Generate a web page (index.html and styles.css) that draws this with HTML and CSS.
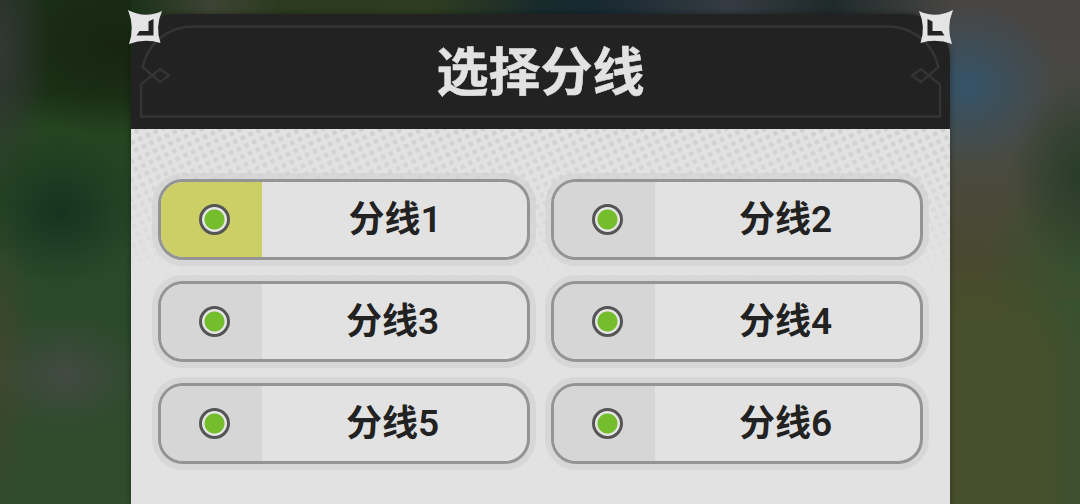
FILE: index.html
```html
<!DOCTYPE html>
<html lang="zh-CN">
<head>
  <meta charset="UTF-8" />
  <meta name="viewport" content="width=device-width, initial-scale=1.0"/>
  <title>选择分线</title>
  <link rel="stylesheet" href="styles.css">
</head>
<body>
  <div class="panel">
    <div class="header">
      <svg class="frame" width="819" height="115" viewBox="0 0 819 115">
        <g fill="none" stroke="#343434" stroke-width="2.5">
          <path d="M409 12.500H62C40 12.500 18 26 11.500 53L29 68L38 61.500L29 55L10 70.500V102.500H409"/>
          <path d="M409 12.500H757C779 12.500 801 26 807.500 53L790 68L781 61.500L790 55L809 70.500V102.500H409"/>
        </g>
      </svg>
      <svg class="star left" width="34" height="34" viewBox="0 0 34 34">
        <path fill="#e4e4e4" d="M0 0Q17 9 34 1Q27 17 32.500 33Q17 28 1 34Q7 17 0 0Z"/>
        <path fill="#222" d="M20.500 11.500L25.500 9V25.500H8.500L11.500 21H20.500Z"/>
      </svg>
      <svg class="star right" width="34" height="34" viewBox="0 0 34 34">
        <path fill="#e4e4e4" d="M0 0Q17 9 34 1Q27 17 32.500 33Q17 28 1 34Q7 17 0 0Z"/>
        <path fill="#222" d="M20.500 11.500L25.500 9V25.500H8.500L11.500 21H20.500Z"/>
      </svg>
      <h1>选择分线</h1>
    </div>
    <div class="content">
      <svg class="halftone" width="819" height="150">
        <pattern id="dots" width="8.500" height="8.500" patternUnits="userSpaceOnUse" patternTransform="rotate(-25)">
          <circle cx="4.250" cy="4.250" r="2.500" fill="#d0d0d0"/>
        </pattern>
        <rect width="819" height="150" fill="url(#dots)"/>
      </svg>
      <div class="lines">
        <button class="line active"><span class="state"><i class="dot"></i></span><span class="name">分线<b class="one">1</b></span></button>
        <button class="line"><span class="state"><i class="dot"></i></span><span class="name">分线<b>2</b></span></button>
        <button class="line"><span class="state"><i class="dot"></i></span><span class="name">分线<b>3</b></span></button>
        <button class="line"><span class="state"><i class="dot"></i></span><span class="name">分线<b>4</b></span></button>
        <button class="line"><span class="state"><i class="dot"></i></span><span class="name">分线<b>5</b></span></button>
        <button class="line"><span class="state"><i class="dot"></i></span><span class="name">分线<b>6</b></span></button>
      </div>
    </div>
  </div>
</body>
</html>
```

FILE: styles.css
```css
* { box-sizing: border-box; }
body {
  margin: 0;
  height: 504px;
  padding: 14px 130px 0 131px;
  overflow: hidden;
  font-family: "Noto Sans CJK SC", sans-serif;
  background:
    linear-gradient(90deg, #1b3118, #3e4434 80px, #2c3b20 150px, #2e3d20 300px, #192a2c 410px, #172830 460px, #353b42 600px, #1f2a2a 700px, #474544) 131px 0 / 819px 60px no-repeat,
    radial-gradient(ellipse 90px 80px at 968px 85px, #34546a, rgba(52,84,106,0.5) 45%, rgba(52,84,106,0)),
    radial-gradient(ellipse 85px 75px at 60px 210px, #16331f, rgba(22,51,31,0.5) 45%, rgba(22,51,31,0)),
    radial-gradient(ellipse 85px 60px at 65px 375px, #434a42, rgba(67,74,66,0.5) 45%, rgba(67,74,66,0)),
    radial-gradient(ellipse 50px 150px at 0 50px, #333735, rgba(51,55,53,0)),
    radial-gradient(ellipse 140px 90px at 115px 45px, #172510, rgba(23,37,16,0.6) 45%, rgba(23,37,16,0)),
    radial-gradient(ellipse 35px 160px at 0 360px, #3e462a, rgba(62,70,42,0)),
    radial-gradient(ellipse 75px 100px at 1085px 175px, #273c28, rgba(39,60,40,0.6) 45%, rgba(39,60,40,0)),
    radial-gradient(ellipse 100px 90px at 1085px 265px, #36512f, rgba(54,81,47,0)),
    linear-gradient(90deg, rgba(60,80,48,0) 490px, #3c5030 540px) 540px 300px / 540px 204px no-repeat,
    linear-gradient(#474544 0, #494a42 150px, #48492f 260px, #484f2b 320px, #484f2b 100%) 540px 0 no-repeat,
    linear-gradient(#1b3118 0, #1c3519 90px, #24431f 125px, #29482a 250px, #304c2c 100%);
}
.panel {
  height: 490px;
  display: flex;
  flex-direction: column;
  border-radius: 44px 44px 0 0;
  box-shadow: 0 0 6px rgba(0,0,0,0.35);
}
.header {
  position: relative;
  height: 115px;
  display: flex;
  align-items: center;
  justify-content: center;
  padding-bottom: 5px;
  background: #222;
  border-radius: 44px 44px 0 0;
}
.frame { position: absolute; left: 0; top: 0; }
.star { position: absolute; top: -4px; }
.star.left { left: -3px; }
.star.right { right: -3px; transform: scaleX(-1); }
h1 {
  margin: 0;
  color: #e2e2e2;
  font-size: 52px;
  line-height: 60px;
  font-weight: 700;
  -webkit-text-stroke: 0.5px #e2e2e2;
}
.content {
  position: relative;
  flex: 1;
  padding: 50px 27px 0;
  background: #e2e2e2;
}
.halftone {
  position: absolute;
  left: 0;
  top: 0;
  -webkit-mask-image: linear-gradient(#000, transparent);
  mask-image: linear-gradient(#000, transparent);
}
.lines {
  position: relative;
  display: grid;
  grid-template-columns: 372px 372px;
  gap: 21px;
}
.line {
  display: flex;
  height: 81px;
  padding: 0;
  overflow: hidden;
  background: #e2e2e2;
  border: 3px solid #949494;
  border-radius: 25px;
  box-shadow: 0 0 0 6px rgba(208,208,208,0.6);
  font-family: inherit;
  color: #222;
}
.state {
  width: 101px;
  height: 100%;
  padding-left: 6px;
  display: flex;
  align-items: center;
  justify-content: center;
  background: #d6d6d6;
}
.active .state { background: #cbcf66; }
.dot {
  width: 31px;
  height: 31px;
  border: 3px solid #555;
  border-radius: 50%;
  background: radial-gradient(circle, #74bd2d 9.5px, #e6e6e6 10.5px);
}
.name {
  flex: 1;
  align-self: center;
  padding: 0 4px 4px 0;
  font-size: 36px;
  line-height: 50px;
  font-weight: 700;
  text-align: center;
}
.name b {
  font-family: Roboto, sans-serif;
  font-size: 37px;
  font-weight: 600;
}
.name .one { margin-right: -5px; }
```
